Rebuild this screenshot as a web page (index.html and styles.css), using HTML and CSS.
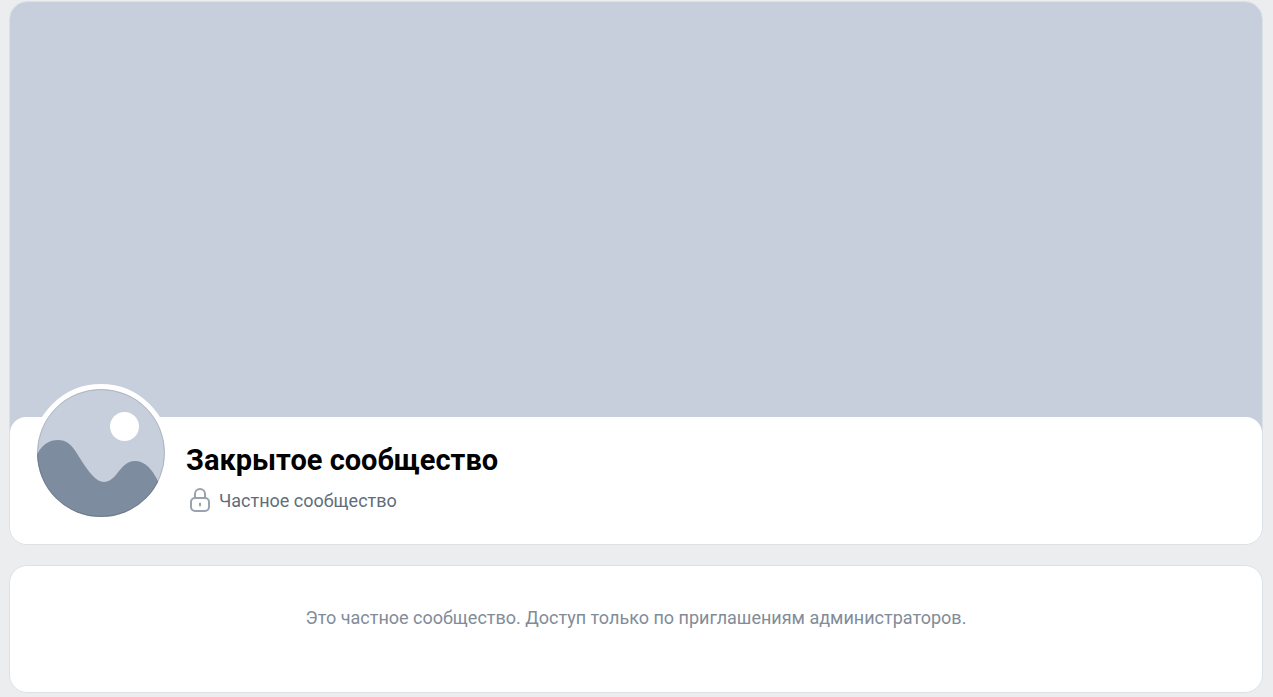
FILE: index.html
```html
<!DOCTYPE html>
<html lang="ru">
<head>
    <meta charset="UTF-8">
    <meta name="viewport" content="width=device-width, initial-scale=1.0">
    <title>Закрытое сообщество</title>
    <link rel="stylesheet" href="styles.css">
</head>
<body>
    <main class="page">
        <header class="card group-header">
            <div class="group-cover"></div>
            <div class="group-info">
                <div class="group-avatar">
                    <svg viewBox="0 0 128 128" role="img" aria-label="Фото сообщества">
                        <clipPath id="avatar-clip"><circle cx="64" cy="64" r="64"/></clipPath>
                        <g clip-path="url(#avatar-clip)">
                            <rect width="128" height="128" fill="#c7cedc"/>
                            <circle cx="87.500" cy="37.500" r="14.500" fill="#fff"/>
                            <path d="M-2 70C3 57 11 51 21 51c8 0 13 4 18 12l6 9.500c3 4.500 6 9 10 13.500 4 4.500 8 7 12 7s8-2.500 12-7c6-8 11-14 19-14 10 0 17 8 23 20v37H-2z" fill="#7d8c9f"/>
                        </g>
                        <circle cx="64" cy="64" r="63.500" fill="none" stroke="#000" stroke-opacity=".12"/>
                    </svg>
                </div>
                <div class="group-text">
                    <h1 class="group-name">Закрытое сообщество</h1>
                    <div class="group-type">
                        <svg class="lock-icon" viewBox="0 0 26 26" fill="none" stroke="#99a2ad" stroke-width="2" stroke-linecap="round">
                            <rect x="5" y="10" width="18" height="13" rx="4"/>
                            <path d="M9 10V6a5 5 0 0 1 10 0v4M14 15.500v2"/>
                        </svg>
                        <span>Частное сообщество</span>
                    </div>
                </div>
            </div>
        </header>
        <section class="card group-closed">
            <p>Это частное сообщество. Доступ только по приглашениям администраторов.</p>
        </section>
    </main>
</body>
</html>
```
FILE: styles.css
```css
* {
    box-sizing: border-box;
}

body {
    margin: 0;
    background: #ecedef;
    color: #000;
    font-family: Roboto, "Noto Sans", sans-serif;
    font-size: 18px;
    line-height: 24px;
}

.page {
    display: flex;
    flex-direction: column;
    gap: 20px;
    padding: 1px 10px 4px 9px;
}

.card {
    background: #fff;
    border: 1px solid #dce1e6;
    border-radius: 18px;
    overflow: hidden;
}

.group-cover {
    aspect-ratio: 1252 / 431;
    background: #c7cedc;
}

.group-info {
    display: flex;
    gap: 16px;
    margin-top: -16px;
    padding: 0 22px 22px;
    background: #fff;
    border-radius: 16px;
}

.group-avatar {
    flex: none;
    width: 138px;
    height: 138px;
    margin-top: -33px;
    border: 5px solid #fff;
    border-radius: 50%;
    background: #fff;
}

.group-avatar svg {
    display: block;
}

.group-text {
    padding-top: 26px;
}

.group-name {
    margin: 0 0 11px;
    font-size: 29px;
    font-weight: 700;
    line-height: 34px;
}

.group-type {
    display: flex;
    align-items: center;
    gap: 7px;
    color: #626d7a;
}

.lock-icon {
    width: 26px;
    height: 26px;
}

.group-closed {
    padding: 40px 36px 62px;
    color: #818c99;
    text-align: center;
}

.group-closed p {
    margin: 0;
}
```
